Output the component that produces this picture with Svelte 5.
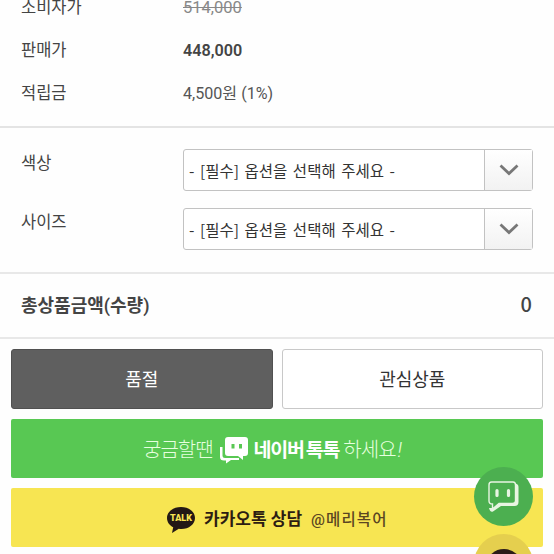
<script>
    const prices = [
        { label: '소비자가', value: '514,000', kind: 'old' },
        { label: '판매가', value: '448,000', kind: 'sale' },
        { label: '적립금', value: '4,500원 (1%)', kind: 'point' },
    ];

    const options = ['색상', '사이즈'];
    const placeholder = '- [필수] 옵션을 선택해 주세요 -';
    let total = 0;
</script>

<main>
    <section class="prices">
        {#each prices as price}
            <div class="row">
                <span class="label">{price.label}</span>
                <span class={price.kind}>{price.value}</span>
            </div>
        {/each}
    </section>

    <section class="options">
        {#each options as option}
            <div class="option">
                <span class="label">{option}</span>
                <div class="select">
                    <span class="choice">{placeholder}</span>
                    <span class="arrow">
                        <svg width="20" height="12" viewBox="0 0 20 12">
                            <path d="M1.5 1.5 L10 9.5 L18.5 1.5" fill="none" stroke="#777" stroke-width="2.8" />
                        </svg>
                    </span>
                </div>
            </div>
        {/each}
    </section>

    <section class="total">
        <strong>총상품금액(수량)</strong>
        <span class="sum">{total}</span>
    </section>

    <section class="actions">
        <div class="buttons">
            <button class="soldout">품절</button>
            <button class="wish">관심상품</button>
        </div>
        <div class="banner naver">
            <span class="ask">궁금할땐</span>
            <svg class="talk" width="29" height="28" viewBox="0 0 29 28">
                <path d="M0 11 H2.5 V20 Q2.5 22 5 22 H19 V24 H11 L6 27.5 V24.5 H4 Q0 24.5 0 21 Z" fill="#fff" />
                <path d="M8 1 H25 Q28 1 28 4 V17 Q28 20 25 20 H23 V24 L18 20 H8 Q5 20 5 17 V4 Q5 1 8 1 Z" fill="#fff" />
                <path d="M13 8 V12.5 M20.5 8 V12.5" stroke="#58c853" stroke-width="3" />
            </svg>
            <span class="name">네이버</span>
            <span class="name toktok">톡톡</span>
            <span class="please">하세요<i>!</i></span>
        </div>
        <div class="banner kakao">
            <span class="bubble">
                <svg width="28" height="26" viewBox="0 0 28 26">
                    <path d="M14 0 C6 0 0 4.7 0 11 C0 15 2.4 18.3 6.2 20.2 L5 26 L11.8 21.8 C20.5 23 28 18 28 11 C28 4.7 22 0 14 0 Z" fill="#231815" />
                </svg>
                <b>TALK</b>
            </span>
            <span class="title">카카오톡 상담</span>
            <span class="shop">@메리복어</span>
        </div>
    </section>

    <div class="float green">
        <svg width="34" height="34" viewBox="0 0 34 34">
            <path d="M28.5 3.5 Q31.5 4 31.5 7 V22 Q31.5 26 27.5 26 H14 L6 31.5 Q3 32.5 2 28 L5 28 L12 23.5 H25 Q28 23.5 28 20.5 Z" fill="#e8f5e2" />
            <path d="M4.5 2 H26 Q28.5 2 28.5 5 V21 Q28.5 23.5 25.5 23.5 H12 L5.5 29 V24 Q2 24 2 21 V5 Q2 2 4.5 2 Z" fill="#4caf50" stroke="#e8f5e2" stroke-width="1.4" />
            <path d="M10 10.5 V15.5 M21.5 10.5 V15.5" stroke="#e8f5e2" stroke-width="3.2" stroke-linecap="round" />
        </svg>
    </div>
    <div class="float yellow">
        <span class="dot"></span>
    </div>
</main>

<style>
    :global(body) {
        overflow: hidden;
        background: #fefefe;
    }

    main {
        position: relative;
        box-sizing: border-box;
        width: 554px;
        height: 554px;
        overflow: hidden;
        background: #fefefe;
        color: #444;
        font-family: Roboto, "Noto Sans CJK KR", sans-serif;
        font-size: 16.5px;
    }

    section {
        box-sizing: border-box;
    }

    .prices {
        height: 128px;
        border-bottom: 2px solid #e4e4e4;
    }

    .row {
        display: flex;
        box-sizing: border-box;
        height: 43px;
        align-items: center;
    }

    .row:first-child {
        height: 29px;
        padding-bottom: 14px;
    }

    .row span {
        line-height: 24px;
    }

    .label {
        width: 162px;
        padding-left: 21px;
        flex: none;
    }

    .old {
        color: #888;
        text-decoration: line-through;
    }

    .sale {
        font-size: 16.2px;
        font-weight: 600;
    }

    .point {
        color: #555;
        font-size: 16.1px;
    }

    .options {
        height: 146px;
        padding: 21px 21px 0 0;
        border-bottom: 2px solid #e8e8e8;
    }

    .option {
        display: flex;
        height: 59px;
    }

    .option .label {
        line-height: 30px;
    }

    .select {
        display: flex;
        flex: 1;
        box-sizing: border-box;
        height: 42px;
        border: 1px solid #c2c2c2;
        border-radius: 3px;
        background: #fff;
    }

    .choice {
        flex: 1;
        padding-left: 5px;
        color: #333;
        font-family: "Noto Sans CJK KR", sans-serif;
        font-size: 15.5px;
        line-height: 40px;
        white-space: nowrap;
        word-spacing: 2.1px;
    }

    .arrow {
        display: flex;
        width: 47px;
        align-items: center;
        justify-content: center;
        border-left: 1px solid #c2c2c2;
        background: linear-gradient(#fff, #f2f2f2);
    }

    .total {
        display: flex;
        height: 65px;
        padding: 0 22px 3px 21px;
        align-items: center;
        justify-content: space-between;
        border-bottom: 2px solid #e8e8e8;
        font-size: 18px;
    }

    .total strong {
        font-weight: 600;
    }

    .sum {
        margin-bottom: 2px;
        font-family: "Noto Sans CJK KR", sans-serif;
        font-size: 20px;
        font-weight: 500;
    }

    .actions {
        padding: 10px 11px 0;
    }

    .buttons {
        display: flex;
        gap: 9px;
    }

    button {
        flex: 1;
        height: 60px;
        padding: 0 0 2px;
        border: 1px solid #c8c8c8;
        border-radius: 3px;
        background: #fff;
        color: #333;
        font: 18px Roboto, "Noto Sans CJK KR", sans-serif;
    }

    .soldout {
        border-color: #505050;
        background: #5f5f5f;
        color: #fff;
    }

    .banner {
        display: flex;
        height: 59px;
        margin-top: 10px;
        align-items: center;
        border-radius: 2px;
        white-space: nowrap;
    }

    .naver {
        padding-left: 132px;
        box-sizing: border-box;
        background: #58c853;
        color: #fff;
        font-size: 20px;
    }

    .ask,
    .please {
        color: #e6ffdf;
        font-weight: 300;
        letter-spacing: -1px;
    }

    .please i {
        margin-left: 2px;
    }

    .talk {
        margin: 2px 5px 0 7px;
    }

    .name {
        font-size: 19.5px;
        font-weight: 700;
        letter-spacing: -1.2px;
    }

    .toktok {
        margin: 0 4px 0 2px;
    }

    .kakao {
        padding-left: 156px;
        box-sizing: border-box;
        background: #f7e552;
        color: #2d1d12;
    }

    .bubble {
        position: relative;
        width: 28px;
        height: 26px;
        margin-top: 4px;
    }

    .bubble b {
        position: absolute;
        top: 5px;
        left: 0;
        width: 28px;
        color: #f7e552;
        font-size: 9px;
        font-weight: 900;
        line-height: 12px;
        text-align: center;
    }

    .title {
        margin-left: 9px;
        font-size: 17px;
        font-weight: 700;
    }

    .shop {
        margin-left: 9px;
        color: #5b4522;
        font-size: 15.5px;
        font-weight: 500;
        letter-spacing: 1.1px;
    }

    .float {
        position: absolute;
        display: flex;
        left: 474px;
        width: 59px;
        height: 59px;
        border-radius: 50%;
        justify-content: center;
    }

    .green {
        top: 467px;
        align-items: center;
        background: #4caf50;
    }

    .yellow {
        top: 534px;
        background: #e5cf4e;
    }

    .dot {
        width: 34px;
        height: 30px;
        margin-top: 15px;
        border-radius: 50%;
        background: #2b1b18;
    }
</style>
